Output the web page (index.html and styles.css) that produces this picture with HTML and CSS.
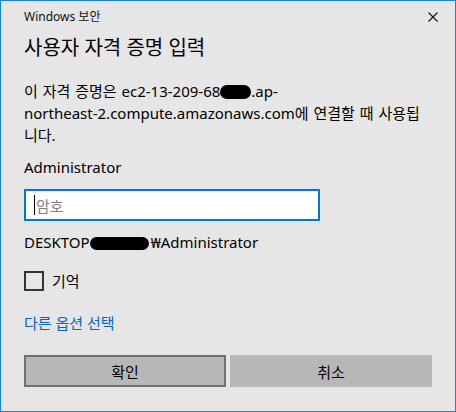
FILE: index.html
```html
<!DOCTYPE html>
<html lang="ko">

<head>
  <meta charset="UTF-8">
  <title>Windows 보안</title>
  <link rel="stylesheet" href="styles.css">
</head>

<body>
  <div class="dialog">
    <div class="titlebar">
      <span class="app-name">Windows 보안</span>
      <svg class="close" viewBox="0 0 10 10" width="10" height="10">
        <path d="M0.5 0.5 L9.5 9.5 M9.5 0.5 L0.5 9.5" />
      </svg>
    </div>

    <h1 class="heading">사용자 자격 증명 입력</h1>

    <p class="message">
      이 자격 증명은 ec2-13-209-68<span class="redact redact-host"></span>.ap-<br>northeast-2.compute.amazonaws.com에 연결할 때 사용됩<br>니다.
    </p>

    <div class="user">Administrator</div>

    <div class="field">
      <span class="caret"></span>
      <span class="placeholder">암호</span>
    </div>

    <div class="domain">DESKTOP<span class="redact redact-pc"></span>₩Administrator</div>

    <label class="remember">
      <span class="checkbox"></span>
      <span>기억</span>
    </label>

    <a class="more" href="#">다른 옵션 선택</a>

    <div class="buttons">
      <button class="btn primary">확인</button>
      <button class="btn">취소</button>
    </div>
  </div>
</body>

</html>
```

FILE: styles.css
```css
:root {
  --color-bg: #e6e6e6;
  --color-frame: #1883d7;
  --color-text: #000;
  --color-accent: #0078d7;
  --color-link: #0067c0;
  --color-button: #b7b7b7;
  --color-button-border: #707070;
}

* {
  margin: 0;
  padding: 0;
  box-sizing: border-box;
}

body {
  font-family: "Noto Sans", "Noto Sans CJK KR", sans-serif;
  color: var(--color-text);
  background: #fff;
}

.dialog {
  width: 456px;
  height: 412px;
  padding: 0 23px;
  border: 1px solid var(--color-frame);
  background-color: var(--color-bg);

  display: flex;
  flex-direction: column;
}

.titlebar {
  margin-top: 7px;
  height: 18px;

  display: flex;
  align-items: center;
  justify-content: space-between;

  .app-name {
    font-size: 12px;
    line-height: 18px;
    color: #111;
  }

  .close {
    margin-right: -6px;

    path {
      stroke: #111;
      stroke-width: 1.1;
      fill: none;
    }
  }
}

.heading {
  margin-top: 7px;
  font-size: 20px;
  font-weight: normal;
  line-height: 30px;
}

.message {
  margin-top: 17px;
  font-size: 15px;
  line-height: 22px;
  word-spacing: 1px;
}

.redact {
  display: inline-block;
  vertical-align: -2px;
  background-color: #000;
  border-radius: 8px;
}

.redact-host {
  width: 31px;
  height: 14px;
}

.redact-pc {
  width: 59px;
  height: 13px;
  margin-right: 2px;
}

.user {
  margin-top: 10px;
  font-size: 15px;
  line-height: 22px;
}

.field {
  margin-top: 11px;
  width: 296px;
  height: 32px;
  padding: 0 8px;
  border: 2px solid var(--color-accent);
  background-color: #fff;

  display: flex;
  align-items: center;

  .caret {
    width: 1px;
    height: 20px;
    background-color: #000;
  }

  .placeholder {
    margin-left: 1px;
    font-size: 15px;
    color: #808080;
  }
}

.domain {
  margin-top: 10px;
  font-size: 15px;
  line-height: 22px;
}

.remember {
  margin-top: 17px;
  font-size: 15px;

  display: flex;
  align-items: center;
  gap: 8px;

  .checkbox {
    width: 20px;
    height: 20px;
    border: 2px solid #333;
  }
}

.more {
  margin-top: 21px;
  font-size: 15px;
  line-height: 22px;
  color: var(--color-link);
  text-decoration: none;
}

.buttons {
  margin-top: 21px;

  display: grid;
  grid-template-columns: 1fr 1fr;
  gap: 4px;

  .btn {
    height: 32px;
    border: none;
    background-color: var(--color-button);
    font-family: inherit;
    font-size: 15px;
    color: #000;
  }

  .btn.primary {
    border: 2px solid var(--color-button-border);
  }
}
```
